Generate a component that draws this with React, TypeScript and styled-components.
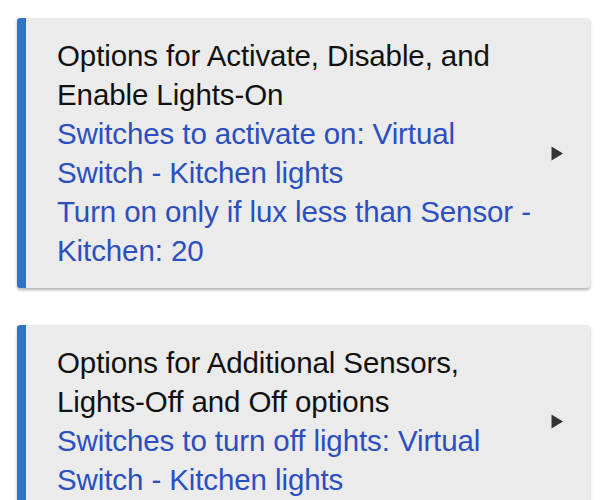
import styled, { createGlobalStyle } from "styled-components"

const GlobalStyle = createGlobalStyle`
  body {
    margin: 0;
    background: #fff;
    font-family: "Liberation Sans", Arial, sans-serif;
  }
`

type TSection = {
  title: string
  details: string[]
}

const sections: TSection[] = [
  {
    title: "Options for Activate, Disable, and Enable Lights-On",
    details: [
      "Switches to activate on: Virtual Switch - Kitchen lights",
      "Turn on only if lux less than Sensor - Kitchen: 20",
    ],
  },
  {
    title: "Options for Additional Sensors, Lights-Off and Off options",
    details: ["Switches to turn off lights: Virtual Switch - Kitchen lights"],
  },
]

export default function App() {
  return (
    <SWrapper>
      <GlobalStyle />
      {sections.map((section) => (
        <SCard key={section.title}>
          <SBody>
            <STitle>{section.title}</STitle>
            {section.details.map((d) => (
              <SDetail key={d}>{d}</SDetail>
            ))}
          </SBody>
          <SArrow viewBox="0 0 12 15" aria-hidden>
            <path d="M0.5 0.5 L12 7.5 L0.5 14.5 Z" fill="#333" />
          </SArrow>
        </SCard>
      ))}
    </SWrapper>
  )
}

const SWrapper = styled.main`
  display: flex;
  flex-direction: column;
  gap: 37px;
  padding: 18px 21px 0 17px;
`

const SCard = styled.div`
  display: flex;
  align-items: center;
  gap: 10px;
  background: #ebebeb;
  border-left: 9px solid #3472c8;
  border-radius: 3px;
  box-shadow: 0 2px 3px rgba(0, 0, 0, 0.3);
  padding: 18px 27px 18px 31px;
`

const SBody = styled.div`
  flex: 1;
  font-size: 29.5px;
  line-height: 39px;
  letter-spacing: -0.1px;
`

const STitle = styled.div`
  color: #111;
`

const SDetail = styled.div`
  color: #2b4fbf;
`

const SArrow = styled.svg`
  width: 12px;
  height: 15px;
  flex-shrink: 0;
`
